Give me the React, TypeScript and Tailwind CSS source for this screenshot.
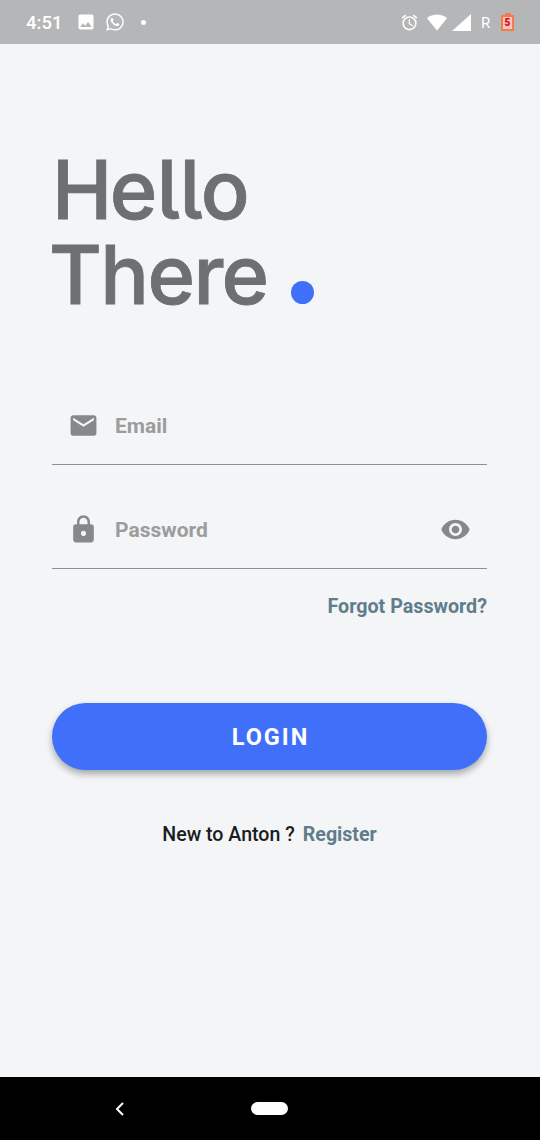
import React from "react";
import { MdAlarm, MdEmail, MdImage, MdLock, MdVisibility } from "react-icons/md";
import { FaWhatsapp } from "react-icons/fa";

function StatusBar() {
  return (
    <header className="flex h-[44px] shrink-0 items-center bg-[#b5b6b8] text-white">
      <span className="ml-[26px] w-[50px] pt-[2px] text-[18.5px] leading-none font-medium">4:51</span>
      <MdImage size={20} />
      <FaWhatsapp size={20} className="ml-[9px]" />
      <span className="ml-[16px] size-[5px] rounded-full bg-white" />
      <div className="ml-auto flex items-center pr-[26px]">
        <MdAlarm size={19} className="mr-[8px]" />
        <svg width="20" height="17" viewBox="0 0 20 17" fill="currentColor" className="mr-[5px]">
          <path d="M10 16.5 0 4.2C5.600-.8 14.400-.8 20 4.200z" />
        </svg>
        <svg width="19" height="17" viewBox="0 0 19 17" fill="currentColor" className="mr-[10px]">
          <path d="M19 0v17H0z" />
        </svg>
        <span className="w-[20px] pt-[3px] text-[15px] leading-none">R</span>
        <div className="flex flex-col items-center">
          <span className="h-[2px] w-[6px] bg-[#f47a50]" />
          <span className="flex h-[16px] w-[13px] items-center justify-center border-2 border-[#f47a50] bg-[#f7c9bd] text-[10px] leading-none font-black text-[#e40019]">5</span>
        </div>
      </div>
    </header>
  );
}

function Heading() {
  return (
    <h1 className="font-['Inter',sans-serif] text-[81px] leading-[85px] font-medium text-[#6d6f71] [-webkit-text-stroke:0.8px_#6d6f71] [font-feature-settings:'cv05']">
      <span className="block tracking-[-0.600px]">
        <span className="tracking-[-2.500px]">H</span>ello
      </span>
      <span className="-ml-[3px] flex items-baseline tracking-[-1.600px]">
        There
        <i className="ml-[23px] size-[23px] rounded-full bg-[#4070f9]" />
      </span>
    </h1>
  );
}

function Field({ icon, label, trailing }: { icon: React.ReactNode; label: string; trailing?: React.ReactNode }) {
  return (
    <div className="flex h-[78px] items-center border-b-[1.500px] border-[#8f9092] px-[16px] text-[#87888a]">
      {icon}
      <span className="ml-[16px] flex-1 text-[21px] leading-[30px] font-bold text-[#9b9c9e]">{label}</span>
      {trailing}
    </div>
  );
}

export default function App() {
  return (
    <div className="flex h-[1140px] w-[540px] flex-col overflow-hidden bg-[#f3f5f7] font-['Roboto',sans-serif]">
      <StatusBar />
      <main className="flex flex-1 flex-col pt-[104px] pr-[53px] pl-[52px]">
        <Heading />
        <form className="mt-[69px] flex flex-col">
          <Field icon={<MdEmail size={31} />} label="Email" />
          <div className="h-[26px]" />
          <Field icon={<MdLock size={31} />} label="Password" trailing={<MdVisibility size={31} />} />
          <a className="mt-[23px] self-end text-[19.700px] leading-[30px] font-bold text-[#607d8b]">Forgot Password?</a>
          <button type="button" className="mt-[81px] h-[67px] rounded-full bg-[#4070f9] pt-[3px] pl-[2px] text-[23.500px] font-bold tracking-[2px] text-white shadow-[0_4px_7px_rgba(0,0,0,0.32)]">
            LOGIN
          </button>
        </form>
        <p className="mt-[50px] flex justify-center gap-[8px] text-[19.600px] leading-[30px] font-medium text-[#1b1c1d]">
          New to Anton ?<a className="font-bold text-[#607d8b]">Register</a>
        </p>
      </main>
      <nav className="flex h-[63px] shrink-0 items-center bg-black">
        <svg width="9" height="14" viewBox="0 0 9 14" fill="none" stroke="white" strokeWidth="2" className="ml-[115px]">
          <path d="M8 1 2 7l6 6" />
        </svg>
        <span className="ml-[127px] h-[13px] w-[37px] rounded-full bg-white" />
      </nav>
    </div>
  );
}
